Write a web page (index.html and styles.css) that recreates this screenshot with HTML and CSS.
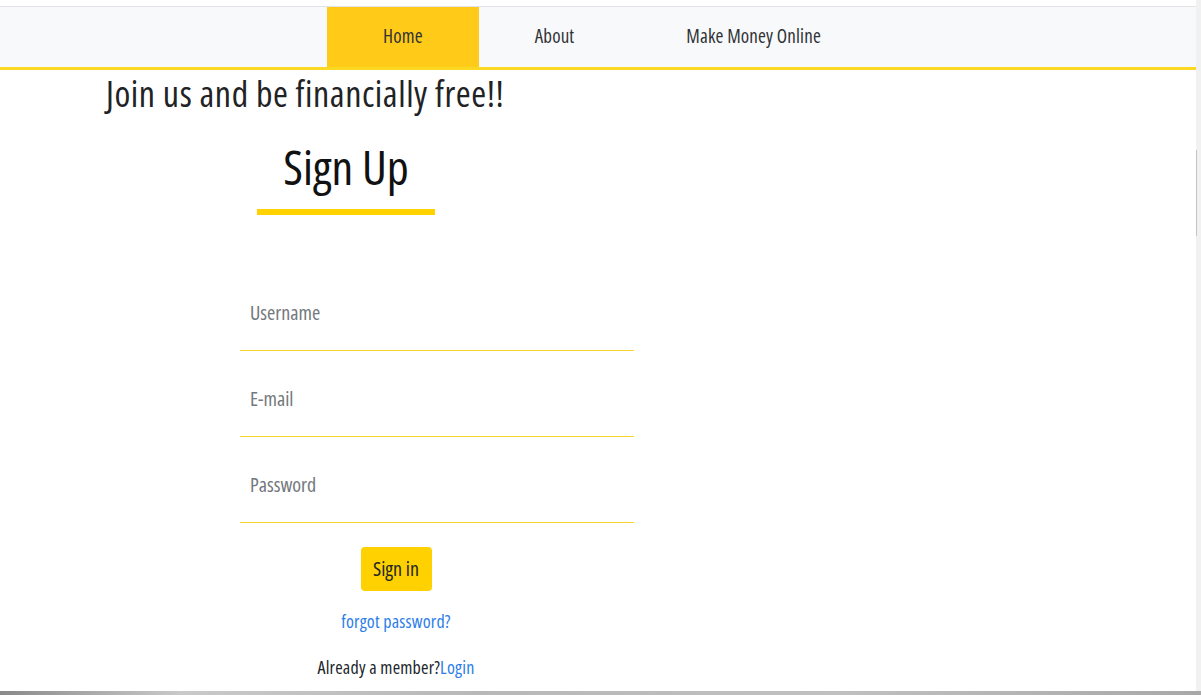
FILE: index.html
```html
<!DOCTYPE html>
<html lang="en">
<head>
<meta charset="utf-8">
<title>Sign Up</title>
<link rel="stylesheet" href="styles.css">
</head>
<body>
<div class="window">
  <div class="page">
    <header class="topbar">
      <nav class="nav">
        <a class="nav-item active" href="#">Home</a>
        <a class="nav-item" href="#">About</a>
        <a class="nav-item" href="#">Make Money Online</a>
      </nav>
    </header>
    <main class="content">
      <h1 class="tagline">Join us and be financially free!!</h1>
      <div class="title-wrap">
        <h2 class="title">Sign Up</h2>
        <div class="title-bar"></div>
      </div>
      <form class="form">
        <div class="field-wrap"><input class="field" type="text" placeholder="Username"></div>
        <div class="field-wrap"><input class="field" type="email" placeholder="E-mail"></div>
        <div class="field-wrap"><input class="field" type="password" placeholder="Password"></div>
      </form>
      <div class="actions">
        <button class="btn" type="button">Sign in</button>
        <a class="link forgot" href="#">forgot password?</a>
        <p class="member">Already a member?<a class="link" href="#">Login</a></p>
      </div>
    </main>
  </div>
  <div class="scrollbar"><div class="thumb"></div></div>
</div>
<div class="bottom-edge"></div>
</body>
</html>
```
FILE: styles.css
```css
* { box-sizing: border-box; }
html, body { margin: 0; padding: 0; }
body {
  font-family: "Open Sans", "Noto Sans", sans-serif;
  font-stretch: 75%;
  color: #212529;
  background: #fff;
  height: 695px;
  overflow: hidden;
  display: flex;
  flex-direction: column;
}
.window {
  display: flex;
  height: 691px;
}
.page {
  flex: 1;
  padding-top: 6px;
}
.scrollbar {
  width: 5px;
  background: #f1f1f1;
  padding-top: 150px;
}
.thumb {
  width: 1px;
  height: 86px;
  background: #c4c4c4;
}
.bottom-edge {
  height: 4px;
  background: linear-gradient(90deg, #8a8a8a 0%, #c9c9c9 15%, #b8b8b8 40%, #c0c0c0 70%, #a8a8a8 100%);
}
.topbar {
  border-top: 1px solid #e1e3e6;
  background: #f8f9fa;
  border-bottom: 3px solid #fbd923;
}
.nav {
  display: flex;
  justify-content: center;
  height: 60px;
  padding-left: 8px;
}
.nav-item {
  display: flex;
  align-items: center;
  padding: 0 56px 2px;
  font-size: 19px;
  letter-spacing: 0.15px;
  color: #303336;
  text-decoration: none;
}
.nav-item.active {
  background: #ffca18;
}
.content {
  padding-left: 106px;
}
.tagline {
  margin: 2px 0 0;
  font-size: 36px;
  font-weight: 500;
  letter-spacing: 0.55px;
  line-height: 44px;
  color: #1f2326;
}
.title-wrap {
  width: 178px;
  margin-left: 151px;
  margin-top: 23px;
  display: flex;
  flex-direction: column;
  align-items: center;
}
.title {
  margin: 0;
  font-size: 48px;
  font-weight: 500;
  line-height: 56px;
  color: #111;
}
.title-bar {
  width: 178px;
  height: 6px;
  background: #ffd200;
  margin-top: 14px;
}
.form {
  width: 394px;
  margin: 61px 0 0 134px;
  display: flex;
  flex-direction: column;
  gap: 11px;
}
.field-wrap {
  height: 75px;
  border-bottom: 1px solid #f8d52e;
  display: flex;
}
.field {
  flex: 1;
  border: 0;
  background: transparent;
  padding: 0 10px 2px;
  font-family: inherit;
  font-stretch: 75%;
  font-size: 20px;
  color: #212529;
  outline: none;
}
.field::placeholder { color: #73787d; }
.actions {
  width: 180px;
  margin-left: 200px;
  margin-top: 24px;
  display: flex;
  flex-direction: column;
  align-items: center;
}
.btn {
  width: 71px;
  height: 44px;
  border: 0;
  border-radius: 4px;
  background: #ffd100;
  font-family: inherit;
  font-stretch: 75%;
  font-size: 20px;
  color: #212529;
  padding: 0 0 2px;
}
.link {
  color: #2b7de9;
  text-decoration: none;
}
.forgot {
  margin-top: 18px;
  font-size: 18px;
  letter-spacing: 0.2px;
  line-height: 24px;
}
.member {
  margin: 22px 0 0;
  font-size: 18px;
  letter-spacing: 0.2px;
  line-height: 24px;
  white-space: nowrap;
}
```
